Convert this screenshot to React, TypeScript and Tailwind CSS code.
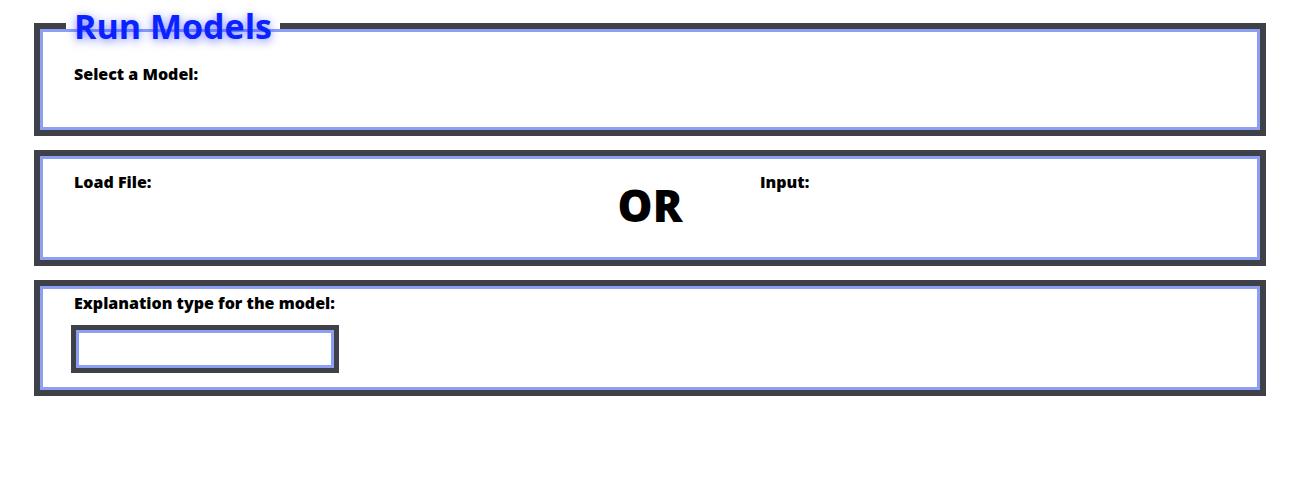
import React from 'react';

const panel =
  'border-[6px] border-[#3f4149] shadow-[inset_0_0_0_3px_#8d9ef5] bg-white mx-[34px] px-[34px]';

const label = 'text-[16px] leading-[22px] font-extrabold';

export default function App() {
  return (
    <div className="w-[1300px] h-[500px] bg-white font-['Open_Sans',sans-serif] text-black pt-[8px]">
      {/* Model selection */}
      <fieldset className={`${panel} h-[128px] pt-[19px]`}>
        <legend className="-ml-[8px] px-[8px] text-[34px] leading-[36px] font-bold text-[#0a22ff] [text-shadow:0_2px_10px_rgba(40,60,255,0.65)]">
          Run Models
        </legend>
        <div className={label}>Select a Model:</div>
      </fieldset>

      {/* File or input */}
      <div className={`${panel} mt-[14px] h-[116px] flex pt-[15px]`}>
        <div className={`w-[466px] ${label}`}>Load File:</div>
        <div className="w-[220px] text-[44px] leading-[44px] font-extrabold text-center pt-[12px]">OR</div>
        <div className={label}>Input:</div>
      </div>

      {/* Explanation */}
      <div className={`${panel} mt-[14px] h-[116px] pt-[6px]`}>
        <div className={label}>Explanation type for the model:</div>
        <div className="mt-[11px] -ml-[3px] w-[268px] h-[48px] border-[5px] border-[#3f4149] shadow-[inset_0_0_0_3px_#8d9ef5]" />
      </div>
    </div>
  );
}
